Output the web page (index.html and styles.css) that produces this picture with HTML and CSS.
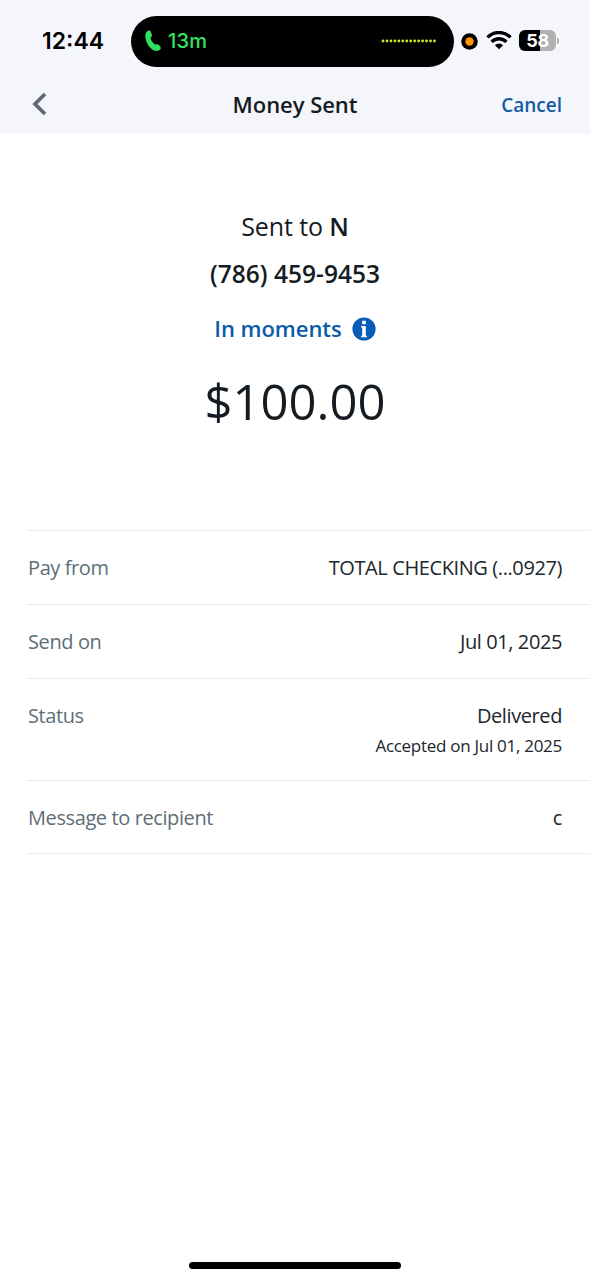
FILE: index.html
```html
<!DOCTYPE html>
<html lang="en">
<head>
<meta charset="utf-8">
<title>Money Sent</title>
<link rel="stylesheet" href="styles.css">
</head>
<body>
<div class="screen">
  <header class="top">
    <div class="status-bar">
      <span class="clock">12:44</span>
      <div class="island">
        <svg class="phone-icon" width="16" height="22" viewBox="0 0 16 22"><path d="M2.2 1.2C3.5.3 5.100.3 5.800 1.700L6.800 4.500C7.200 6 6.300 6.700 5.700 7.900C5.500 8.500 5.700 9.300 6.100 10C7 11.600 8.100 12.900 9.400 14C10.100 14.700 10.900 14.700 11.500 14.500C12.500 14.100 13.300 14.300 14.200 15.200L15.300 16.700C16.100 17.800 15.800 18.800 14.800 19.700C12.500 21.700 9.300 21.300 6.600 19.100C3.200 16.300 1.100 12.100.4 7.500C.1 4.700.6 2.500 2.200 1.200Z" fill="#30e060"/></svg>
        <span class="call-time">13m</span>
        <svg class="wave" width="56" height="4" viewBox="0 0 56 4"><path d="M2 2H54" stroke="#c5e632" stroke-width="2.800" stroke-linecap="round" stroke-dasharray=".01 3.950"/></svg>
      </div>
      <svg class="recording" width="17" height="17" viewBox="0 0 17 17"><circle cx="8.500" cy="8.500" r="8.300" fill="#000"/><circle cx="8.500" cy="8.500" r="4.200" fill="#ff9500"/></svg>
      <svg class="wifi" width="26" height="19" viewBox="0 0 26 19"><g fill="none" stroke="#000" stroke-width="3.300"><path d="M1.500 6.300A16.200 16.200 0 0 1 24.500 6.300"/><path d="M5.600 10.800A10.500 10.500 0 0 1 20.400 10.800"/></g><path d="M8.900 14.200A5.900 5.900 0 0 1 17.100 14.200L13 18.300Z"/></svg>
      <div class="battery"><span class="battery-level">58</span><span class="battery-tip"></span></div>
    </div>
    <nav class="nav">
      <svg class="back" width="16" height="24" viewBox="0 0 16 24"><path d="M14 2L4 12L14 22" fill="none" stroke="#5b6b75" stroke-width="3.700"/></svg>
      <h1 class="title">Money Sent</h1>
      <a class="cancel">Cancel</a>
    </nav>
  </header>
  <main>
    <section class="summary">
      <div class="sent-to">Sent to <b class="name">N</b></div>
      <div class="number">(786) 459-9453</div>
      <div class="timing"><span class="timing-text">In moments</span>
        <svg class="info" width="24" height="24" viewBox="0 0 24 24"><circle cx="12" cy="12" r="11.600" fill="#0b5cb8"/><path d="M10.200 3.800H13.800V7.300H10.200ZM9.100 9H13.800V18.700H14.900V20.300H9.100V18.700H10.200V10.600H9.100Z" fill="#fff"/></svg>
      </div>
      <div class="amount">$100.00</div>
    </section>
    <dl class="details">
      <div class="row"><dt>Pay from</dt><dd class="account">TOTAL CHECKING (...0927)</dd></div>
      <div class="row"><dt>Send on</dt><dd class="date">Jul 01, 2025</dd></div>
      <div class="row row-status"><dt>Status</dt><dd>Delivered<small class="accepted">Accepted on Jul 01, 2025</small></dd></div>
      <div class="row"><dt>Message to recipient</dt><dd>c</dd></div>
    </dl>
  </main>
  <div class="home-bar"></div>
</div>
</body>
</html>
```
FILE: styles.css
```css
* { box-sizing: border-box; }
body { margin: 0; background: #fff; font-family: "Open Sans", "Noto Sans", sans-serif; color: #151b22; }
svg { display: block; flex: none; }
.screen { display: flex; flex-direction: column; width: 590px; height: 1280px; overflow: hidden; }
main { flex: 1; }
.top { height: 134px; background: #f4f6fb; }
.status-bar { display: flex; align-items: center; height: 82px; padding-left: 42px; }
.clock { width: 89px; font: 600 23px/28px Inter, sans-serif; color: #000; white-space: nowrap; }
.island { display: flex; align-items: center; width: 323px; height: 51px; padding: 0 17px 0 14px; border-radius: 26px; background: #000; }
.call-time { margin-left: 7px; font: 500 20px/24px Inter, sans-serif; color: #30e060; letter-spacing: 0.2px; }
.wave { margin-left: auto; }
.recording { margin-left: 7px; }
.wifi { margin: -1px 0 0 8px; }
.battery { position: relative; width: 37px; height: 21px; margin: -2px 0 0 7px; border-radius: 6px; background: linear-gradient(90deg, #000 58%, #b1b1b4 58%); }
.battery-level { display: block; color: #fff; text-align: center; font: 700 18px/21px Inter, sans-serif; letter-spacing: -0.4px; }
.battery-tip { position: absolute; left: 38px; top: 8px; width: 2px; height: 6px; border-radius: 0 2px 2px 0; background: #b1b1b4; }
.nav { display: grid; grid-template-columns: 1fr auto 1fr; align-items: center; height: 44px; padding: 0 28px 0 31px; }
.title { position: relative; left: -1.5px; margin: 0; font-size: 22px; line-height: 30px; font-weight: 600; letter-spacing: -0.05px; }
.cancel { justify-self: end; padding-top: 2px; font-size: 19px; line-height: 30px; font-weight: 600; color: #145ba5; }
.summary { display: flex; flex-direction: column; align-items: center; height: 396px; padding-top: 74px; }
.sent-to { font-size: 25px; line-height: 36px; letter-spacing: -0.1px; }
.name { font-weight: 600; }
.number { margin-top: 12px; font-size: 24.5px; line-height: 36px; font-weight: 600; }
.timing { display: flex; align-items: center; gap: 10px; margin-top: 20px; color: #0b5ba8; font-size: 22px; line-height: 32px; font-weight: 600; letter-spacing: -0.05px; }
.info { margin-top: 1px; }
.amount { margin-top: 24px; font-size: 49px; line-height: 66px; }
.details { margin: 0 0 0 27px; border-top: 1px solid #e9ebed; font-size: 20px; line-height: 28px; letter-spacing: -0.4px; }
.row { display: flex; justify-content: space-between; height: 74px; padding: 23px 28px 0 1px; border-bottom: 1px solid #e9ebed; }
.row-status { height: 102px; }
.row:last-child { height: 73px; }
dt { color: #5e6e77; }
dd { margin: 0; text-align: right; color: #20262b; }
.accepted { display: block; margin-top: 2px; font-size: 17px; line-height: 28px; letter-spacing: -0.28px; }
.home-bar { width: 212px; height: 7px; margin: 0 auto 11px; border-radius: 4px; background: #000; }
```
